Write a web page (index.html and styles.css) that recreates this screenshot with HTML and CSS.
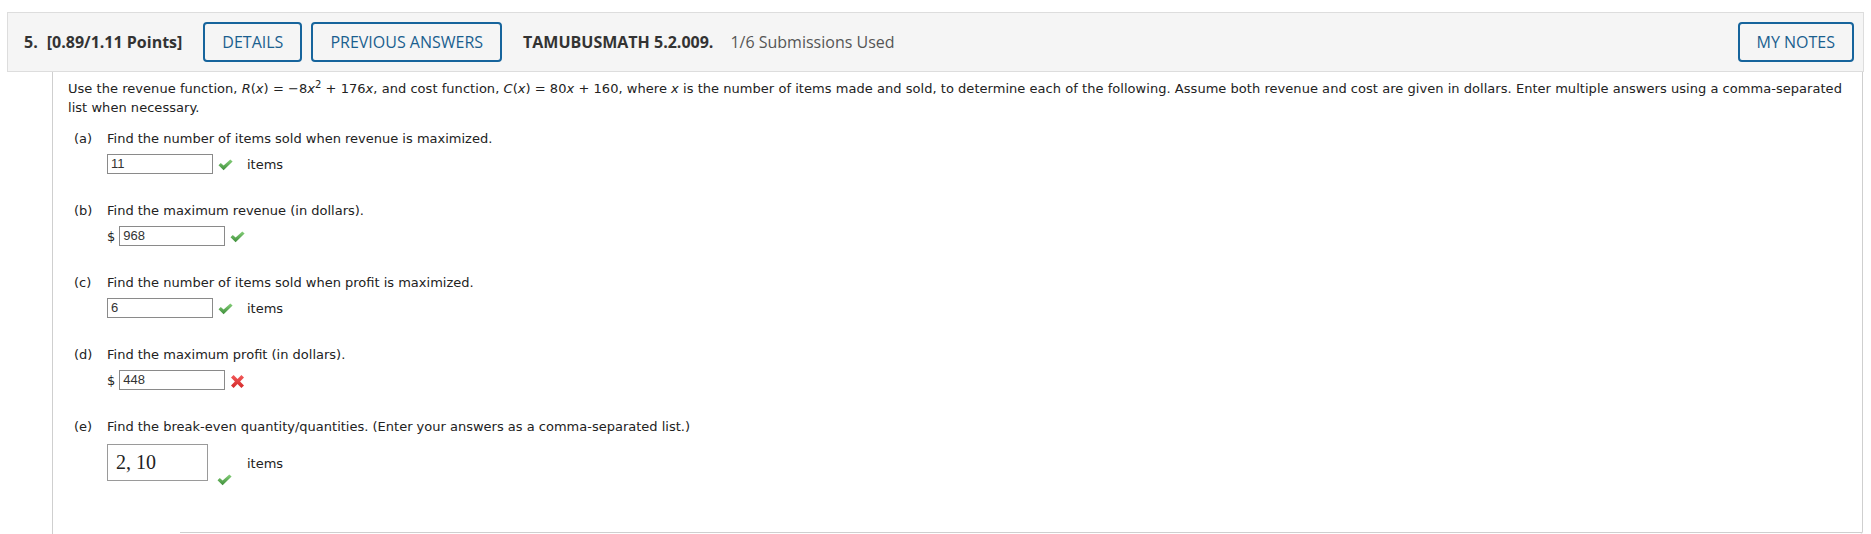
FILE: index.html
```html
<!DOCTYPE html>
<html lang="en">
<head>
<meta charset="utf-8">
<title>Question 5</title>
<link rel="stylesheet" href="styles.css">
</head>
<body>
<div class="page">
  <div class="q-header">
    <span class="q-num">5.</span>
    <span class="q-points">[0.89/1.11 Points]</span>
    <button class="btn btn-details">DETAILS</button>
    <button class="btn btn-prev">PREVIOUS ANSWERS</button>
    <span class="q-id">TAMUBUSMATH 5.2.009.</span>
    <span class="q-subs">1/6 Submissions Used</span>
    <button class="btn btn-notes">MY NOTES</button>
  </div>
  <div class="q-body">
    <p class="intro"><span class="line">Use the revenue function, <i>R</i>(<i>x</i>) = −8<i>x</i><sup>2</sup> + 176<i>x</i>, and cost function, <i>C</i>(<i>x</i>) = 80<i>x</i> + 160, where <i>x</i> is the number of items made and sold, to determine each of the following. Assume both revenue and cost are given in dollars. Enter multiple answers using a comma-separated</span><br><span class="line">list when necessary.</span></p>

    <div class="part">
      <span class="part-label">(a)</span>
      <div class="part-main">
        <div class="part-text">Find the number of items sold when revenue is maximized.</div>
        <div class="answer-row">
          <span class="answer">11</span>
          <svg class="mark check" viewBox="0 0 15 12" width="15" height="12"><defs><linearGradient id="g1" x1="0" y1="0" x2="0" y2="1"><stop offset="0" stop-color="#86d07a"/><stop offset="1" stop-color="#3e8e3a"/></linearGradient></defs><path d="M0.5 6.2 L2.8 4 L5.6 6.6 L12.3 0.4 L14.6 2.6 L5.6 11.2 Z" fill="url(#g1)"/></svg>
          <span class="unit">items</span>
        </div>
      </div>
    </div>

    <div class="part">
      <span class="part-label">(b)</span>
      <div class="part-main">
        <div class="part-text">Find the maximum revenue (in dollars).</div>
        <div class="answer-row">
          <span class="dollar">$</span>
          <span class="answer">968</span>
          <svg class="mark check" viewBox="0 0 15 12" width="15" height="12"><path d="M0.5 6.2 L2.8 4 L5.6 6.6 L12.3 0.4 L14.6 2.6 L5.6 11.2 Z" fill="url(#g1)"/></svg>
        </div>
      </div>
    </div>

    <div class="part">
      <span class="part-label">(c)</span>
      <div class="part-main">
        <div class="part-text">Find the number of items sold when profit is maximized.</div>
        <div class="answer-row">
          <span class="answer">6</span>
          <svg class="mark check" viewBox="0 0 15 12" width="15" height="12"><path d="M0.5 6.2 L2.8 4 L5.6 6.6 L12.3 0.4 L14.6 2.6 L5.6 11.2 Z" fill="url(#g1)"/></svg>
          <span class="unit">items</span>
        </div>
      </div>
    </div>

    <div class="part">
      <span class="part-label">(d)</span>
      <div class="part-main">
        <div class="part-text">Find the maximum profit (in dollars).</div>
        <div class="answer-row">
          <span class="dollar">$</span>
          <span class="answer">448</span>
          <svg class="mark cross" viewBox="0 0 13 13" width="13" height="13"><defs><linearGradient id="g2" x1="0" y1="0" x2="0" y2="1"><stop offset="0" stop-color="#f25a5a"/><stop offset="1" stop-color="#d42a2a"/></linearGradient></defs><path d="M0 2.6 L2.6 0 L6.5 3.9 L10.4 0 L13 2.6 L9.1 6.5 L13 10.4 L10.4 13 L6.5 9.1 L2.6 13 L0 10.4 L3.9 6.5 Z" fill="url(#g2)"/></svg>
        </div>
      </div>
    </div>

    <div class="part part-last">
      <span class="part-label">(e)</span>
      <div class="part-main">
        <div class="part-text">Find the break-even quantity/quantities. (Enter your answers as a comma-separated list.)</div>
        <div class="answer-row answer-row-big">
          <span class="answer answer-big">2, 10</span>
          <svg class="mark check check-low" viewBox="0 0 15 12" width="15" height="12"><path d="M0.5 6.2 L2.8 4 L5.6 6.6 L12.3 0.4 L14.6 2.6 L5.6 11.2 Z" fill="url(#g1)"/></svg>
          <span class="unit unit-big">items</span>
        </div>
      </div>
    </div>

    <div class="body-foot"></div>
  </div>
</div>
</body>
</html>
```
FILE: styles.css
```css
html, body {
  margin: 0;
  padding: 0;
  background: #ffffff;
}

body {
  font-family: "DejaVu Sans", Verdana, sans-serif;
  font-size: 13px;
  color: #222222;
}

.page {
  padding: 12px 7px 0 7px;
}

/* ---------- header ---------- */
.q-header {
  box-sizing: border-box;
  height: 60px;
  display: flex;
  align-items: center;
  padding: 0 9px 0 16px;
  background: #f5f5f5;
  border: 1px solid #dddddd;
  font-family: "Open Sans", "Noto Sans", sans-serif;
  font-size: 16px;
  color: #333333;
}

.q-num {
  font-weight: 700;
  margin-right: 9px;
}

.q-points {
  font-weight: 700;
  margin-right: 21px;
}

.btn {
  box-sizing: border-box;
  height: 40px;
  padding: 0 17px;
  margin: 0;
  border: 2px solid #16649c;
  border-radius: 4px;
  background: transparent;
  color: #1a5f8f;
  font-family: "Open Sans", "Noto Sans", sans-serif;
  font-size: 16px;
  line-height: 36px;
  cursor: pointer;
}

.btn-details {
  margin-right: 9px;
}

.btn-prev {
  margin-right: 21px;
}

.q-id {
  font-weight: 700;
  margin-right: 17px;
}

.q-subs {
  color: #555555;
}

.btn-notes {
  margin-left: auto;
}

/* ---------- body ---------- */
.q-body {
  box-sizing: border-box;
  height: 462px;
  margin: 0 1px 0 45px;
  padding: 7px 0 0 15px;
  border-left: 1px solid #cfcfcf;
  border-right: 1px solid #cfcfcf;
  border-bottom-right-radius: 3px;
  display: flex;
  flex-direction: column;
}

.intro {
  margin: 0 10px 12px 0;
  line-height: 19px;
  letter-spacing: 0.04px;
}

.intro sup {
  font-size: 10px;
  line-height: 0;
  vertical-align: 5px;
}

.part {
  display: flex;
  margin: 0 0 27px 6px;
  line-height: 19px;
}

.part-label {
  width: 33px;
  flex: none;
}

.answer-row {
  display: flex;
  align-items: center;
  height: 20px;
  margin-top: 6px;
}

.dollar {
  margin-right: 4px;
}

.answer {
  box-sizing: border-box;
  width: 106px;
  height: 20px;
  padding-left: 3px;
  border: 1px solid #8a8a8a;
  background: #ffffff;
  font-family: "Liberation Sans", Arial, sans-serif;
  font-size: 13px;
  line-height: 18px;
  color: #333333;
}

.mark {
  flex: none;
  display: block;
}

.check {
  margin-left: 5px;
  margin-top: 2px;
}

.cross {
  margin-left: 6px;
  margin-top: 2px;
}

.unit {
  margin-left: 14px;
}

.answer-row-big {
  align-items: flex-start;
  height: auto;
  margin-top: 8px;
}

.answer-big {
  width: 101px;
  height: 37px;
  padding-left: 8px;
  border-color: #9a9a9a;
  font-family: "Liberation Serif", "Times New Roman", serif;
  font-size: 20px;
  line-height: 35px;
  color: #222222;
}

.check-low {
  margin: 30px 0 0 9px;
}

.unit-big {
  margin: 10px 0 0 15px;
}

.part-last {
  margin-bottom: 0;
}

.body-foot {
  margin: auto 0 1px 112px;
  height: 0;
  border-top: 1px solid #cfcfcf;
}
```
